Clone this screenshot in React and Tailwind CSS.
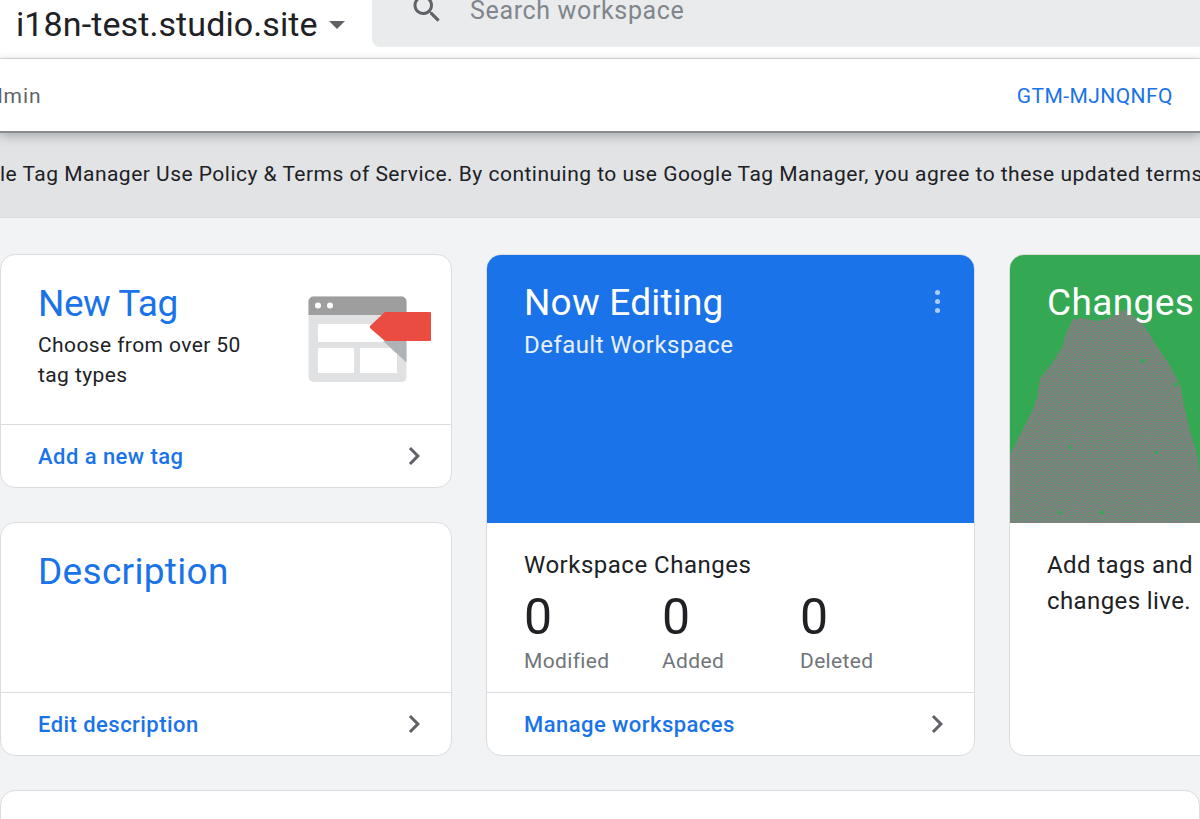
const Chevron = () => (
  <svg width="36" height="36" viewBox="0 0 24 24" className="text-[#5f6368] shrink-0" fill="currentColor">
    <path d="M10 6 8.59 7.41 13.17 12l-4.58 4.59L10 18l6-6z" />
  </svg>
);

const TagArt = () => (
  <svg width="124" height="87" viewBox="308 296 124 87">
    <rect x="308.5" y="296.5" width="98" height="85.5" rx="5" fill="#dfe1e3" />
    <path d="M308.5 315v-13.5a5 5 0 0 1 5-5h88a5 5 0 0 1 5 5V315z" fill="#9e9e9e" />
    <circle cx="318" cy="305.5" r="3" fill="#fff" />
    <circle cx="330" cy="305.5" r="3" fill="#fff" />
    <rect x="318" y="324" width="80" height="18" fill="#fff" />
    <rect x="318" y="348" width="36" height="25" fill="#fff" />
    <rect x="360" y="348" width="37" height="25" fill="#fff" />
    <path d="M383 341h23.5v21.5z" fill="#b0b3b5" />
    <path d="M385 312h45a1 1 0 0 1 1 1v27a1 1 0 0 1-1 1h-45l-14.5-12.5a2 2 0 0 1 0-3z" fill="#ea4c42" />
  </svg>
);

// grey dithered blob on the green card
const specks = [
  [0, 0], [4, 0], [7, 1], [2, 2], [5, 3], [8, 3], [0, 4], [3, 5], [6, 5], [1, 7], [4, 7], [8, 7],
];

const Blob = () => (
  <svg className="absolute left-0 top-0" width="190" height="268" viewBox="1010 254 190 268" shapeRendering="crispEdges">
    <defs>
      <pattern id="dither" width="9" height="9" patternUnits="userSpaceOnUse">
        <rect width="9" height="9" fill="#808080" />
        {specks.map(([x, y]) => (
          <rect key={`${x}-${y}`} x={x} y={y} width="1" height="1" fill="#34a853" />
        ))}
      </pattern>
    </defs>
    <path
      d="M1125 308 1133 315 1143 323 1150 334 1158 347 1167 360 1180 383 1183 400 1190 430 1197 453 1200 473 1200 523 1010 523 1010 453 1012 450 1032 410 1037 397 1040 378 1052 362 1063 345 1066 332 1073 318 1082 317 1098 320 1112 316z"
      fill="url(#dither)"
    />
    <rect x="1141" y="358" width="4" height="4" fill="#34a853" />
    <rect x="1174" y="382" width="4" height="3" fill="#34a853" />
    <rect x="1155" y="450" width="3" height="3" fill="#34a853" />
    <rect x="1068" y="445" width="3" height="3" fill="#34a853" />
    <rect x="1100" y="510" width="4" height="3" fill="#34a853" />
    <rect x="1058" y="510" width="3" height="3" fill="#34a853" />
  </svg>
);

const Footer = ({ label }) => (
  <div className="h-[63px] border-t border-[#dadce0] pl-[37px] pr-[19px] flex items-center justify-between">
    <span className="text-[#1a73e8] text-[22px] font-medium tracking-[0.45px]">{label}</span>
    <Chevron />
  </div>
);

const Stat = ({ label }) => (
  <div className="w-[138px]">
    <div className="text-[50px] leading-[56px] text-[#202124] mt-[6px]">0</div>
    <div className="text-[21px] leading-[32px] text-[#70757a] tracking-[0.35px]">{label}</div>
  </div>
);

export default function App() {
  return (
    <div className="w-[1200px] h-[819px] overflow-hidden bg-[#f1f3f4] font-['Roboto',sans-serif]">
      {/* top bar */}
      <div className="h-[59px] bg-white border-b border-[#dadce0] flex">
        <div className="w-[372px] pl-[16px] flex items-center">
          <span className="text-[34px] text-[#202124] tracking-[0.1px] whitespace-nowrap leading-none pb-[10px]">i18n-test.studio.site</span>
          <span className="ml-[11px] mb-[8px] w-0 h-0 border-x-[8px] border-x-transparent border-t-[8px] border-t-[#5f6368]" />
        </div>
        <div className="flex-1 h-[47px] bg-[#e9ebed] rounded-bl-[8px] overflow-hidden flex items-start">
          <svg width="36" height="36" viewBox="0 0 24 24" fill="#5f6368" className="ml-[37px] -mt-[9px] shrink-0">
            <path d="M15.5 14h-.79l-.28-.27C15.41 12.59 16 11.11 16 9.5 16 5.91 13.09 3 9.5 3S3 5.91 3 9.5 5.91 16 9.5 16c1.61 0 3.09-.59 4.23-1.57l.27.28v.79l5 4.99L20.49 19l-4.99-5zm-6 0C7.01 14 5 11.99 5 9.5S7.01 5 9.5 5 14 7.01 14 9.5 11.99 14 9.5 14z" />
          </svg>
          <span className="ml-[25px] -mt-[1px] text-[25px] leading-[24px] text-[#80868b] tracking-[0.65px] whitespace-nowrap">Search workspace</span>
        </div>
      </div>

      {/* sub bar */}
      <div className="relative h-[74px] bg-white border-b-2 border-[#8a8d90] shadow-[0_3px_10px_rgba(60,64,67,0.35)] flex items-center justify-between pr-[27px] pt-[4px]">
        <span className="-ml-[24px] text-[21px] text-[#5f6368] tracking-[1px]">Admin</span>
        <span className="text-[21px] text-[#1a73e8] tracking-[0.45px]">GTM-MJNQNFQ</span>
      </div>

      {/* notice */}
      <div className="h-[85px] bg-[#e1e3e5] border-b border-[#dadce0] pt-[27px] overflow-hidden">
        <p className="-ml-[52px] text-[21px] leading-[28px] text-[#202124] tracking-[0.48px] whitespace-nowrap">
          Google Tag Manager Use Policy &amp; Terms of Service. By continuing to use Google Tag Manager, you agree to these updated terms
        </p>
      </div>

      {/* cards */}
      <div className="pt-[36px] flex">
        <div className="w-[452px] shrink-0 flex flex-col gap-[34px]">
          <div className="h-[234px] bg-white border border-[#dadce0] rounded-[15px] flex flex-col">
            <div className="flex-1 pl-[37px] pr-[19px] flex justify-between">
              <div className="pt-[25px]">
                <h2 className="text-[37px] leading-[48px] text-[#1a73e8] tracking-[-0.5px]">New Tag</h2>
                <p className="mt-[2px] text-[21px] leading-[30px] text-[#202124] tracking-[0.4px]">Choose from over 50<br />tag types</p>
              </div>
              <div className="pt-[41px]"><TagArt /></div>
            </div>
            <Footer label="Add a new tag" />
          </div>
          <div className="h-[234px] bg-white border border-[#dadce0] rounded-[15px] flex flex-col">
            <div className="flex-1 pl-[37px] pt-[25px]">
              <h2 className="text-[37px] leading-[48px] text-[#1a73e8] tracking-[0.3px]">Description</h2>
            </div>
            <Footer label="Edit description" />
          </div>
        </div>

        <div className="ml-[34px] w-[489px] shrink-0 h-[502px] bg-white border border-[#dadce0] rounded-[15px] overflow-hidden flex flex-col">
          <div className="h-[268px] bg-[#1a73e8] pl-[37px] pr-[34px] pt-[24px] flex justify-between">
            <div>
              <h2 className="text-[37px] leading-[48px] text-white tracking-[0.2px]">Now Editing</h2>
              <p className="text-[24px] leading-[36px] text-[#e8f0fe] tracking-[0.45px]">Default Workspace</p>
            </div>
            <div className="pt-[11px] flex flex-col gap-[4px]">
              <span className="w-[5px] h-[5px] rounded-full bg-[#aecbfa]" />
              <span className="w-[5px] h-[5px] rounded-full bg-[#aecbfa]" />
              <span className="w-[5px] h-[5px] rounded-full bg-[#aecbfa]" />
            </div>
          </div>
          <div className="flex-1 pl-[37px] pt-[24px]">
            <p className="text-[24px] leading-[36px] text-[#202124] tracking-[0.5px]">Workspace Changes</p>
            <div className="flex">
              <Stat label="Modified" />
              <Stat label="Added" />
              <Stat label="Deleted" />
            </div>
          </div>
          <Footer label="Manage workspaces" />
        </div>

        <div className="ml-[34px] w-[400px] shrink-0 h-[502px] bg-white border border-[#dadce0] rounded-[15px] overflow-hidden flex flex-col">
          <div className="relative h-[268px] bg-[#34a853] pl-[37px] pt-[24px]">
            <Blob />
            <h2 className="relative text-[37px] leading-[48px] text-white tracking-[0.4px]">Changes</h2>
          </div>
          <p className="pl-[37px] pt-[24px] text-[24px] leading-[36px] text-[#202124] tracking-[0.4px]">Add tags and<br />changes live.</p>
        </div>
      </div>

      <div className="mt-[34px] h-[100px] bg-white border border-[#dadce0] rounded-t-[15px]" />
    </div>
  );
}
